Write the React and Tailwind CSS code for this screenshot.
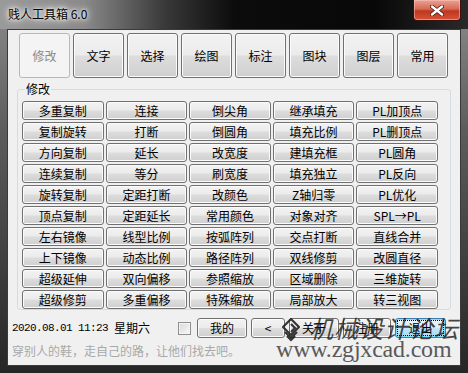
const tabs = ["修改", "文字", "选择", "绘图", "标注", "图块", "图层", "常用"];

const tools = [
  "多重复制", "连接", "倒尖角", "继承填充", "PL加顶点",
  "复制旋转", "打断", "倒圆角", "填充比例", "PL删顶点",
  "方向复制", "延长", "改宽度", "建填充框", "PL圆角",
  "连续复制", "等分", "刷宽度", "填充独立", "PL反向",
  "旋转复制", "定距打断", "改颜色", "Z轴归零", "PL优化",
  "顶点复制", "定距延长", "常用颜色", "对象对齐", "SPL→PL",
  "左右镜像", "线型比例", "按弧阵列", "交点打断", "直线合并",
  "上下镜像", "动态比例", "路径阵列", "双线修剪", "改圆直径",
  "超级延伸", "双向偏移", "参照缩放", "区域删除", "三维旋转",
  "超级修剪", "多重偏移", "特殊缩放", "局部放大", "转三视图",
];

const btn =
  "flex items-center justify-center rounded-[3px] border border-[#707070] text-black shadow-[inset_0_0_0_1px_#fbfbfb] bg-[linear-gradient(180deg,#f3f3f3_0%,#ebebeb_48%,#dddddd_52%,#cfcfcf_100%)]";

export default function App() {
  return (
    <div className="relative w-[468px] h-[373px] overflow-hidden bg-[linear-gradient(180deg,#8c8c8c_0%,#5c5c5c_35%,#262626_100%)] font-['Noto_Sans_CJK_SC','Liberation_Sans',sans-serif] text-[12px]">
      {/* title bar */}
      <div className="relative h-[29px] bg-[linear-gradient(90deg,#9a9a9a_0%,#8a8a8a_18%,#3a3a3a_35%,#0c0c0c_50%,#080808_80%,#2a2a2a_100%)]">
        <div className="pl-[8px] pt-[7px] leading-[14px] text-[12px] text-black [text-shadow:0_0_6px_#fff,0_0_10px_#fff,0_0_3px_#fff]">
          贱人工具箱 6.0
        </div>
        <div className="absolute left-[413px] top-0 w-[48px] h-[21px] rounded-b-[4px] border border-t-0 border-[#3a1010] bg-[linear-gradient(180deg,#e9a395_0%,#d66a55_45%,#c0351e_55%,#d2553a_100%)] shadow-[inset_0_0_0_1px_rgba(255,200,190,0.5)] flex items-center justify-center">
          <svg width="14" height="11" viewBox="0 0 14 11">
            <path d="M2 1.5 L12 9.5 M12 1.5 L2 9.5" stroke="#4a1a10" strokeWidth="4" strokeLinecap="round" />
            <path d="M2 1.5 L12 9.5 M12 1.5 L2 9.5" stroke="#fff" strokeWidth="2.4" strokeLinecap="round" />
          </svg>
        </div>
      </div>

      {/* client area */}
      <div className="mx-[7px] h-[337px] border border-[#3a3a3a] bg-[#f0f0f0]">
        <div className="flex gap-[3px] pl-[11px] pt-[3px]">
          {tabs.map((t, i) =>
            i === 0 ? (
              <div
                key={t}
                className="flex h-[45px] w-[51px] items-center justify-center rounded-[3px] border border-[#b5b9bc] bg-[#f4f4f4] text-[#8a8a8a]"
              >
                {t}
              </div>
            ) : (
              <div key={t} className={`${btn} h-[45px] w-[51px]`}>
                {t}
              </div>
            )
          )}
        </div>

        {/* group box */}
        <div className="relative ml-[9px] mt-[11px] h-[221px] w-[434px] rounded-[3px] border border-[#d5dbdf]">
          <div className="absolute -top-[9px] left-[7px] bg-[#f0f0f0] px-[1px] leading-[16px] text-black">修改</div>
          <div className="grid w-[420px] grid-cols-5 gap-x-[2px] gap-y-[2px] pl-[4px] pt-[11px]">
            {tools.map((t) => (
              <div key={t} className={`${btn} h-[19px] leading-none`}>
                {t}
              </div>
            ))}
          </div>
        </div>

        {/* bottom row */}
        <div className="mt-[8px] flex h-[20px] items-center pl-[4px]">
          <div className="flex w-[166px] items-center text-black">
            <span className="font-['Liberation_Mono',monospace] text-[11px] tracking-[-0.6px]">2020.08.01 11:23</span>
            <span className="ml-[6px]">星期六</span>
          </div>
          <div className="h-[13px] w-[13px] border border-[#8f8f8f] bg-[linear-gradient(135deg,#d8d8d8,#f8f8f8)] shadow-[inset_0_0_0_1px_#f4f4f4]" />
          <div className="ml-[6px] flex gap-[4px]">
            <div className={`${btn} h-[20px] w-[50px]`}>我的</div>
            <div className={`${btn} h-[20px] w-[34px]`}>&lt;</div>
            <div className={`${btn} h-[20px] w-[50px]`}>关于</div>
            <div className={`${btn} h-[20px] w-[48px]`}>注册</div>
            <div className="flex h-[20px] w-[51px] items-center justify-center rounded-[3px] border border-[#3c7fb1] bg-[linear-gradient(180deg,#eaf6fd_0%,#d9f0fc_48%,#bee6fd_52%,#a7d9f5_100%)] shadow-[inset_0_0_0_1px_#7de0fb]">
              <span className="border border-dotted border-black px-[10px] leading-[14px]">退出</span>
            </div>
          </div>
        </div>

        <div className="mt-[6px] pl-[4px] leading-[14px] text-[#a8a8a8]">穿别人的鞋，走自己的路，让他们找去吧。</div>
      </div>

      {/* watermark */}
      <div className="pointer-events-none absolute left-[282px] top-[318px]">
        <svg width="18" height="24" viewBox="0 0 18 24" fill="none" stroke="#222" strokeWidth="2.2" opacity="0.9">
          <path d="M9 1 L17 9 L9 17 L1 9 Z" />
          <path d="M9 6 L13 10 L9 14" />
          <path d="M3 14 L9 20 L15 14" />
          <path d="M5 18 L9 22 L13 18" />
        </svg>
      </div>
      <div className="pointer-events-none absolute left-[309px] top-[314px] font-['Noto_Sans_CJK_SC',sans-serif] text-[24px] font-normal italic leading-[28px] tracking-[1px] text-[#1a1a1a] opacity-80">
        机械设计论坛
      </div>
      <div className="pointer-events-none absolute left-[276px] top-[337px] font-['Liberation_Serif',serif] text-[24px] leading-none tracking-[-0.2px] text-[#4a4a4a] opacity-90">
        www.zgjxcad.com
      </div>
    </div>
  );
}
